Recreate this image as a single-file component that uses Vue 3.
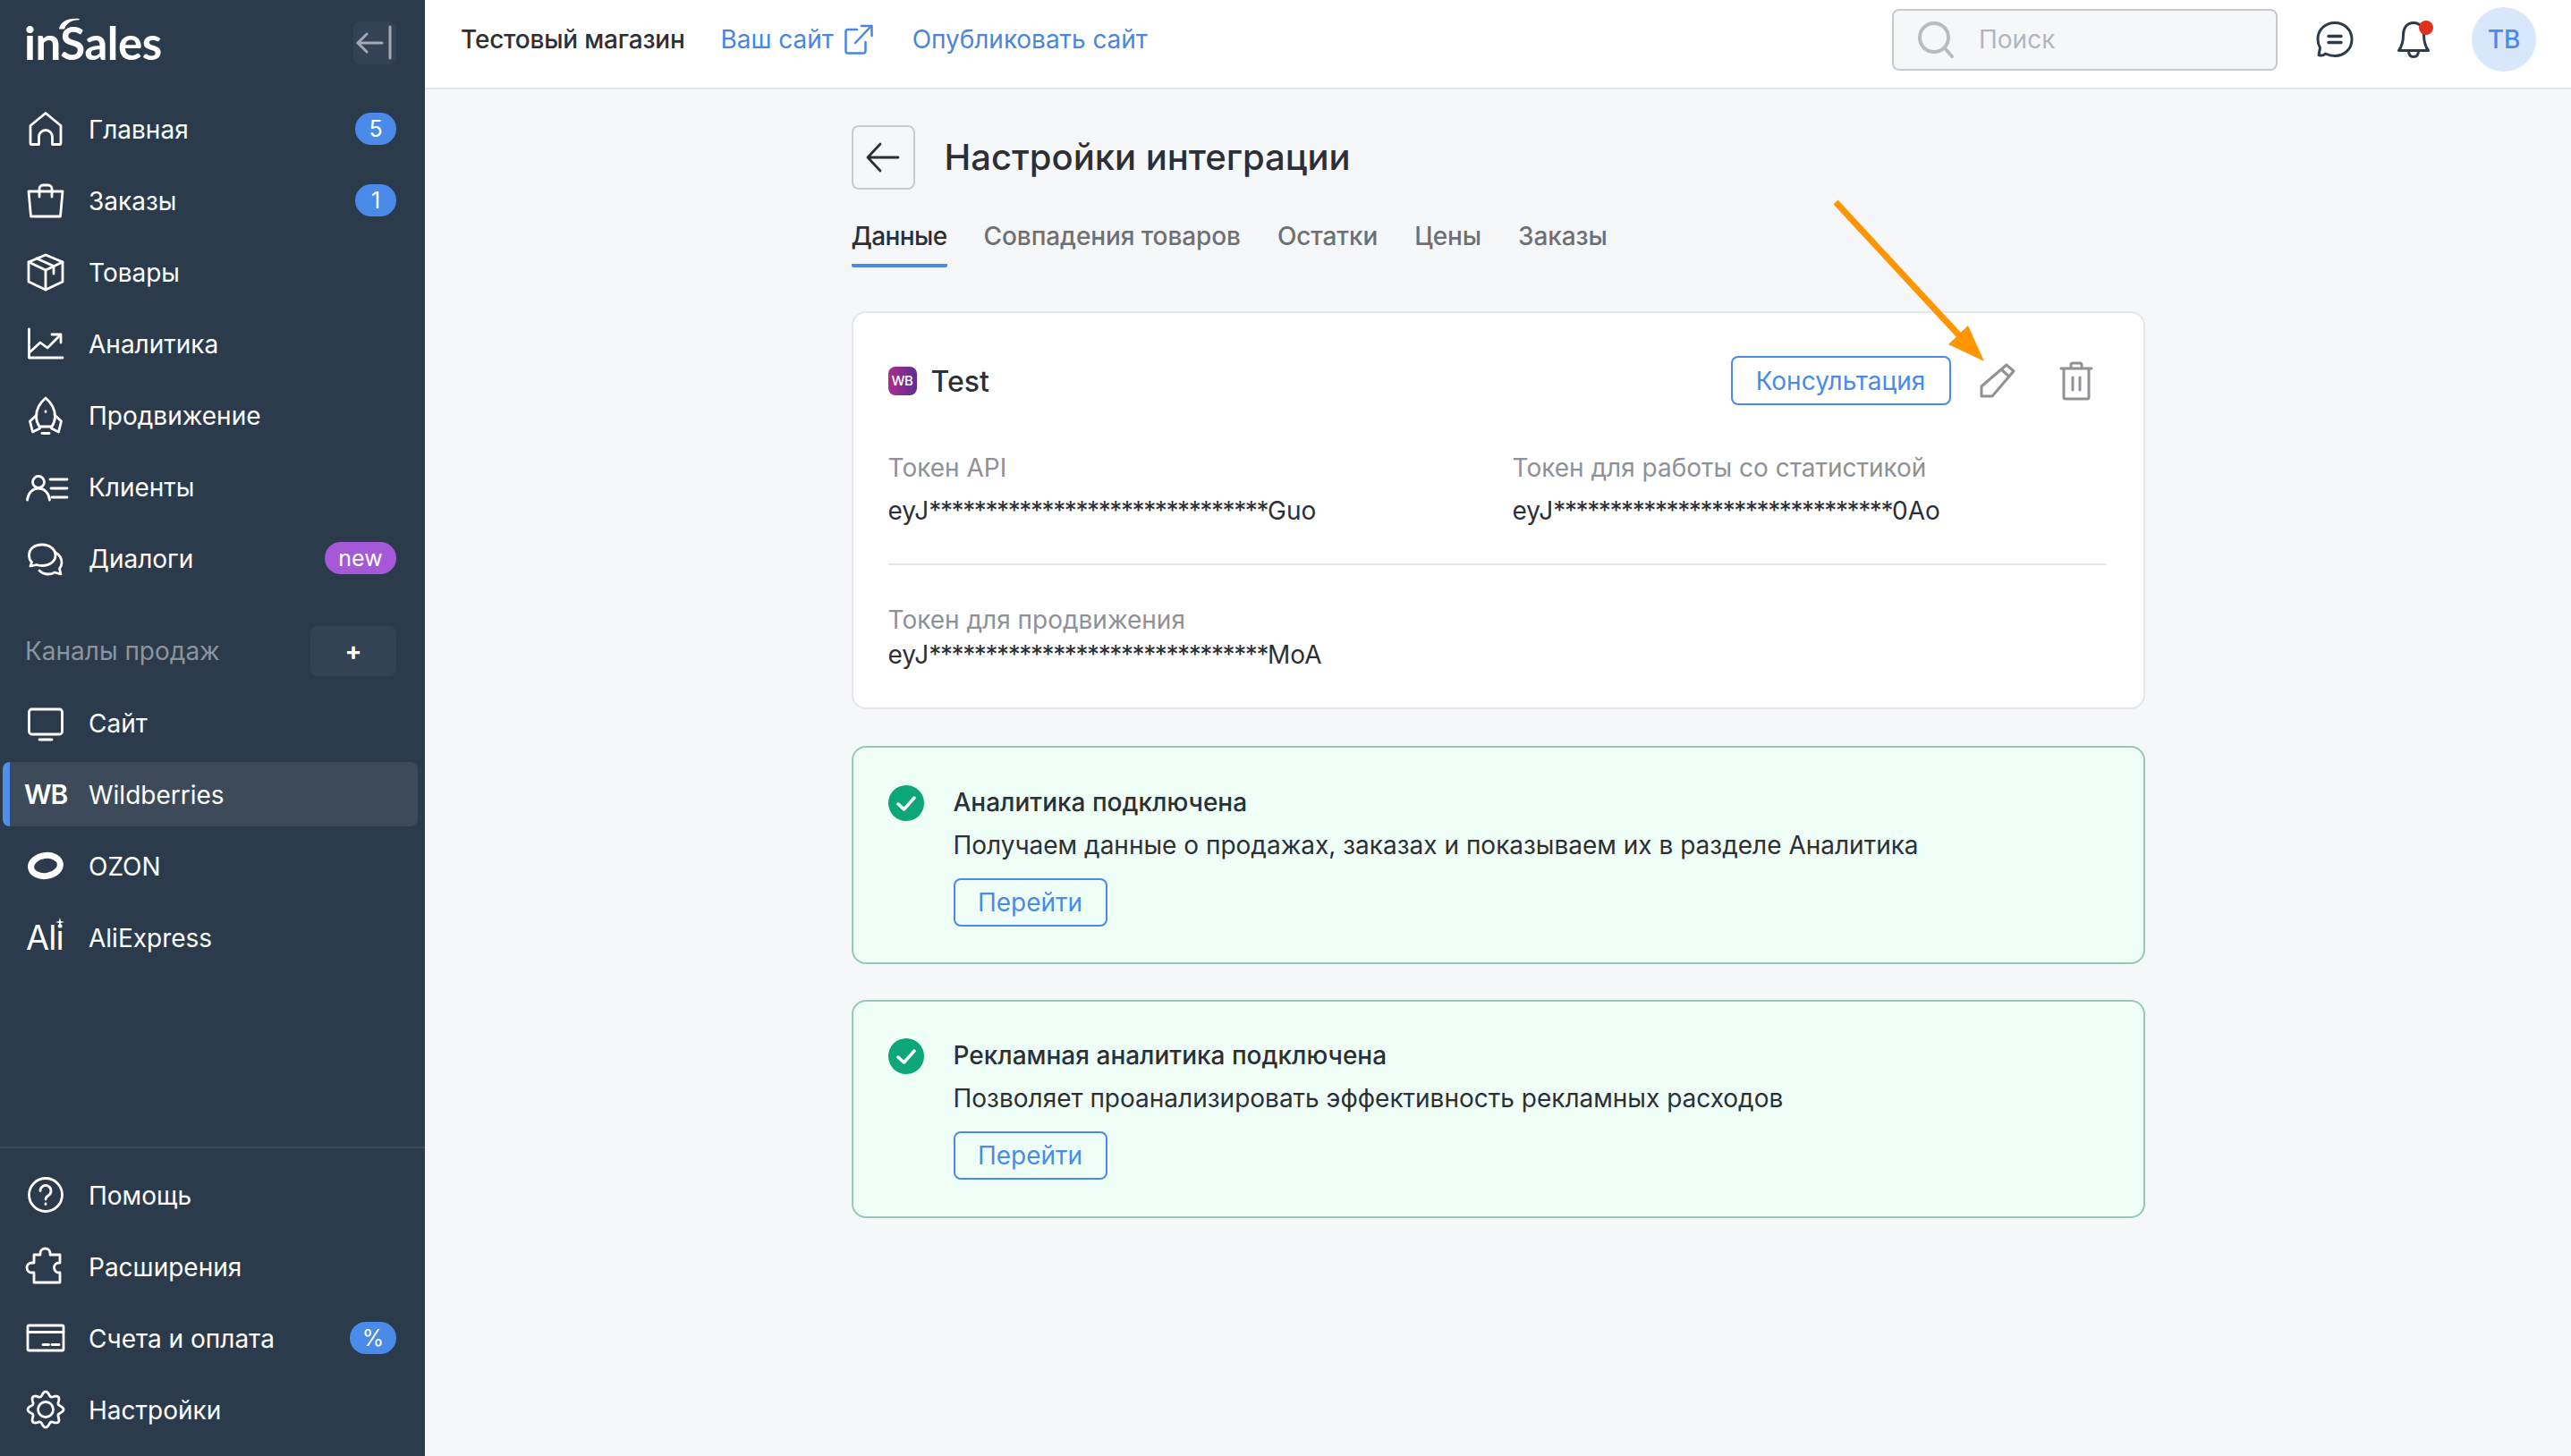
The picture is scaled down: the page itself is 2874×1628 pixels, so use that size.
<script setup>
const gear = (() => {
  let d = ''
  for (let i = 0; i <= 120; i++) {
    const t = (i / 120) * Math.PI * 2
    const r = 17.6 + 2.4 * Math.cos(8 * t)
    const x = 22 + r * Math.cos(t)
    const y = 22 + r * Math.sin(t)
    d += (i ? 'L' : 'M') + x.toFixed(2) + ' ' + y.toFixed(2)
  }
  return d + 'Z'
})()

const I = {
  home: ['M5 18.5 22 4.5 39 18.5V38a1.5 1.5 0 0 1-1.5 1.5H29.5V31a7.5 7.5 0 0 0-15 0v8.5H6.5A1.5 1.5 0 0 1 5 38Z'],
  bag: ['M3 12H41L38.5 40H5.5Z', 'M15 18V9a4 4 0 0 1 4-4h6a4 4 0 0 1 4 4v9'],
  box: ['M22 3 41 11V33L22 42 3 33V11Z', 'M3 11 22 20 41 11', 'M22 20V42', 'M12 7 31 15.5V24'],
  chart: ['M3.5 6V38H41', 'M4 32 16 21 24 27 38 13', 'M29 12H39V21'],
  rocket: ['M22 3C15 9 11.5 17 11.5 23.5c0 4 1.5 8.5 3.5 11.5h14c2-3 3.5-7.5 3.5-11.5 0-6.5-3.5-14.500-10.500-20.500Z', 'M12 22 4.500 29 7.500 41 15.500 37', 'M32 22 39.500 29 36.500 41 28.500 37', 'M18 42.500h8', 'M22 18v.5'],
  users: ['M14 10.5a6.5 6.5 0 1 0 0 13 6.5 6.5 0 0 0 0-13Z', 'M1.5 37c1-8 6-13 12.500-13s11.500 5 12.500 13', 'M27 14H46', 'M28 24H46', 'M29 34H46'],
  chat: ['M18 7C9 7 3.500 12 3.500 19c0 3 1 5.500 3 7.500L5 31l7-1.500c2 .8 4 1 6 1 9 0 15-5 15-11.500S27 7 18 7Z', 'M32.500 15.500C37 18 40 22 40 27c0 3-1 5-2.500 7L39 40l-7-2c-2 1.500-4.500 2-7 2-4 0-7.500-1.500-10-4'],
  monitor: ['M6.500 7h31a3 3 0 0 1 3 3v22a3 3 0 0 1-3 3h-31a3 3 0 0 1-3-3V10a3 3 0 0 1 3-3Z', 'M15 41H29'],
  help: ['M22 3.500a18.500 18.500 0 1 0 0 37 18.500 18.500 0 0 0 0-37Z', 'M16 17.500a6 6 0 1 1 9 5.200c-2 1.200-3 2.300-3 4.300', 'M22 32v.5'],
  puzzle: ['M9 40H38V29h-1a5.500 5.500 0 0 1 0-11h1V9H27V7.500a5.500 5.500 0 0 0-11 0V9H9v9H6.500a5.500 5.500 0 0 0 0 11H9Z'],
  card: ['M3.500 8h37a1.500 1.500 0 0 1 1.500 1.500v25a1.500 1.500 0 0 1-1.500 1.500h-37A1.500 1.500 0 0 1 2 34.500v-25A1.500 1.500 0 0 1 3.500 8Z', 'M2 15.500H42', 'M19 29.500h6.500', 'M29 29.500h8'],
  gear: [gear, 'M22 13.500a8.500 8.500 0 1 0 0 17 8.500 8.500 0 0 0 0-17Z'],
}

const mainNav = [
  { label: 'Главная', icon: 'home', badge: '5' },
  { label: 'Заказы', icon: 'bag', badge: '1' },
  { label: 'Товары', icon: 'box' },
  { label: 'Аналитика', icon: 'chart' },
  { label: 'Продвижение', icon: 'rocket' },
  { label: 'Клиенты', icon: 'users' },
  { label: 'Диалоги', icon: 'chat', badge: 'new', purple: true },
]
const bottomNav = [
  { label: 'Помощь', icon: 'help' },
  { label: 'Расширения', icon: 'puzzle' },
  { label: 'Счета и оплата', icon: 'card', badge: '%' },
  { label: 'Настройки', icon: 'gear' },
]
const tabs = ['Совпадения товаров', 'Остатки', 'Цены', 'Заказы']
const notices = [
  { title: 'Аналитика подключена', text: 'Получаем данные о продажах, заказах и показываем их в разделе Аналитика' },
  { title: 'Рекламная аналитика подключена', text: 'Позволяет проанализировать эффективность рекламных расходов' },
]
const stars = '*'.repeat(30)
</script>

<template>
  <div class="app">
    <aside class="side">
      <div class="brand">
        <div class="logo">
          <span class="logo-text">inSales</span>
          <svg class="swoosh" viewBox="0 0 24 13"><path d="M1 12.500C2 5 10 0 23 1c1 .1 1 1.200 0 1.300C15 2.500 9 6 7 12.500Z" fill="#fff" /></svg>
        </div>
        <button class="collapse">
          <svg viewBox="0 0 48 48" width="48" height="48" fill="none" stroke="#a3a9b1" stroke-width="3" stroke-linecap="round"><path d="M5 24H32M15 14 5 24 15 34" /><path d="M41 6V41" /></svg>
        </button>
      </div>

      <nav class="nav">
        <a v-for="n in mainNav" :key="n.label" class="item">
          <svg class="ico" viewBox="0 0 44 44" fill="none" stroke="#fff" stroke-width="2.800" stroke-linecap="round" stroke-linejoin="round">
            <path v-for="(d, i) in I[n.icon]" :key="i" :d="d" />
          </svg>
          <span class="lbl">{{ n.label }}</span>
          <span v-if="n.badge" class="badge" :class="{ purple: n.purple }">{{ n.badge }}</span>
        </a>
      </nav>

      <div class="section">
        <span>Каналы продаж</span>
        <button class="plus">+</button>
      </div>

      <nav class="nav">
        <a class="item">
          <svg class="ico" viewBox="0 0 44 44" fill="none" stroke="#fff" stroke-width="2.800" stroke-linecap="round" stroke-linejoin="round">
            <path v-for="(d, i) in I.monitor" :key="i" :d="d" />
          </svg>
          <span class="lbl">Сайт</span>
        </a>
        <a class="item active">
          <span class="ico wb">WB</span>
          <span class="lbl">Wildberries</span>
        </a>
        <a class="item">
          <svg class="ico" viewBox="0 0 44 44"><ellipse cx="22" cy="22" rx="16.500" ry="11.500" transform="rotate(-8 22 22)" fill="none" stroke="#fff" stroke-width="7" /></svg>
          <span class="lbl">OZON</span>
        </a>
        <a class="item">
          <span class="ico ali">Ali<svg class="star" viewBox="0 0 10 10"><path d="M5 0 6 4 10 5 6 6 5 10 4 6 0 5 4 4Z" fill="#fff" /></svg></span>
          <span class="lbl">AliExpress</span>
        </a>
      </nav>

      <nav class="nav bottom">
        <a v-for="n in bottomNav" :key="n.label" class="item">
          <svg class="ico" viewBox="0 0 44 44" fill="none" stroke="#fff" stroke-width="2.800" stroke-linecap="round" stroke-linejoin="round">
            <path v-for="(d, i) in I[n.icon]" :key="i" :d="d" />
          </svg>
          <span class="lbl">{{ n.label }}</span>
          <span v-if="n.badge" class="badge pct">{{ n.badge }}</span>
        </a>
      </nav>
    </aside>

    <div class="right">
      <header class="top">
        <span class="store">Тестовый магазин</span>
        <a class="link site">Ваш сайт
          <svg viewBox="0 0 32 34" width="32" height="34" fill="none" stroke="#4a86e0" stroke-width="2.500" stroke-linecap="round" stroke-linejoin="round"><path d="M14 6H4a2.500 2.500 0 0 0-2.500 2.500V30A2.500 2.500 0 0 0 4 32.500h17a2.500 2.500 0 0 0 2.500-2.500V20" /><path d="M12 21 30 2" /><path d="M19 2H30.500V13" /></svg>
        </a>
        <a class="link">Опубликовать сайт</a>
        <div class="search">
          <svg viewBox="0 0 42 42" width="42" height="42" fill="none" stroke="#b9bbc0" stroke-width="4" stroke-linecap="round"><path d="M19 3a16 16 0 1 0 0 32 16 16 0 0 0 0-32Z" /><path d="M31 31 39 40" /></svg>
          <span>Поиск</span>
        </div>
        <svg class="t-chat" viewBox="0 0 42 42" width="42" height="42" fill="none" stroke="#2c3b4c" stroke-width="3" stroke-linecap="round" stroke-linejoin="round"><path d="M21 2.500C10 2.500 2 10.500 2 20.500c0 4 1 7.500 2.500 10L3 38.500c2.500 1 5.500 .5 7.500-1.500 3 1.500 6.500 2.500 10.500 2.500 11 0 19-8 19-18.500S32 2.500 21 2.500Z" /><path d="M14 17.500H28M14 24.500H28" stroke-width="3.500" /></svg>
        <div class="bell">
          <svg viewBox="0 0 40 42" width="40" height="42" fill="none" stroke="#2c3b4c" stroke-width="3" stroke-linecap="round" stroke-linejoin="round"><path d="M20 2.500C12 2.500 8.500 9 8.500 16c0 6-1 12-5 17.500h33c-4-5.500-5-11.500-5-17.500 0-7-3.500-13.500-11.500-13.500Z" /><path d="M14.500 33.500c0 4.500 2 7 5.500 7s5.500-2.500 5.500-7" /></svg>
          <i></i>
        </div>
        <div class="avatar">ТВ</div>
      </header>

      <main class="main">
        <div class="content">
          <div class="title-row">
            <button class="back">
              <svg viewBox="0 0 40 40" width="40" height="40" fill="none" stroke="#2d2f36" stroke-width="2.800" stroke-linecap="round" stroke-linejoin="round"><path d="M4 20H37M17 5 3 20 17 35" /></svg>
            </button>
            <h1>Настройки интеграции</h1>
          </div>

          <div class="tabs">
            <span class="tab on">Данные</span>
            <span v-for="t in tabs" :key="t" class="tab">{{ t }}</span>
          </div>

          <section class="card">
            <div class="card-head">
              <span class="wb-logo">WB</span>
              <span class="card-name">Test</span>
              <button class="btn cons">Консультация</button>
              <svg class="act pencil" viewBox="0 0 48 48" width="48" height="48" fill="none" stroke="#8f9196" stroke-width="3" stroke-linejoin="round"><path d="M34 6 42 13 18 41H6V30Z" /><path d="M29 12 37 19" /></svg>
              <svg class="act" viewBox="0 0 48 48" width="48" height="48" fill="none" stroke="#8f9196" stroke-width="3" stroke-linecap="round" stroke-linejoin="round"><path d="M7 10H41" /><path d="M18 9V6a2 2 0 0 1 2-2h8a2 2 0 0 1 2 2v3" /><path d="M10 11V42a2 2 0 0 0 2 2h24a2 2 0 0 0 2-2V11" /><path d="M20 20V34M28 20V34" /></svg>
            </div>
            <div class="grid">
              <div>
                <div class="f-label">Токен API</div>
                <div class="f-value">eyJ<span class="stars">{{ stars }}</span>Guo</div>
              </div>
              <div>
                <div class="f-label">Токен для работы со статистикой</div>
                <div class="f-value">eyJ<span class="stars">{{ stars }}</span>0Ao</div>
              </div>
            </div>
            <div class="sep"></div>
            <div class="f-label second">Токен для продвижения</div>
            <div class="f-value close">eyJ<span class="stars">{{ stars }}</span>MoA</div>
          </section>

          <section v-for="n in notices" :key="n.title" class="notice">
            <svg class="check" viewBox="0 0 40 40" width="40" height="40"><circle cx="20" cy="20" r="20" fill="#0ca678" /><path d="M11 21 17.500 27 29 14" fill="none" stroke="#fff" stroke-width="3.500" stroke-linecap="round" stroke-linejoin="round" /></svg>
            <div class="n-body">
              <div class="n-title">{{ n.title }}</div>
              <div class="n-text">{{ n.text }}</div>
              <button class="btn go">Перейти</button>
            </div>
          </section>
        </div>
      </main>
    </div>

    <svg class="pointer" viewBox="0 0 190 200" width="190" height="200">
      <path d="M2 6 141 156" fill="none" stroke="#ff9500" stroke-width="7" />
      <path d="M168 184 150 144 128 165Z" fill="#ff9500" />
    </svg>
  </div>
</template>

<style scoped>
.app {
  position: relative;
  display: flex;
  width: 2874px;
  height: 1628px;
  overflow: hidden;
  font-family: Inter, "Noto Sans", sans-serif;
  font-size: 28px;
  line-height: 34px;
  color: #2d2f36;
  background: #f6f7f9;
}
button { font: inherit; cursor: pointer; }

/* sidebar */
.side {
  flex: 0 0 475px;
  display: flex;
  flex-direction: column;
  background: #2c3b4c;
  color: #fff;
  box-sizing: border-box;
  padding-bottom: 8px;
}
.brand {
  display: flex;
  justify-content: space-between;
  align-items: center;
  height: 108px;
  padding: 0 32px 12px 27px;
  box-sizing: border-box;
}
.logo { position: relative; }
.logo-text {
  font-family: Lato, Inter, sans-serif;
  font-weight: 700;
  font-size: 51px;
  line-height: 60px;
  letter-spacing: -.5px;
}
.swoosh { position: absolute; left: 38px; top: 2px; width: 24px; height: 13px; }
.collapse {
  width: 48px;
  height: 48px;
  padding: 0;
  border: 0;
  border-radius: 8px;
  background: #344255;
}
.nav { display: flex; flex-direction: column; }
.item {
  position: relative;
  display: flex;
  align-items: center;
  height: 72px;
  margin-bottom: 8px;
  padding-left: 29px;
  padding-right: 32px;
  font-size: 28px;
}
.item.active { margin-left: 3px; margin-right: 8px; padding-left: 26px; padding-right: 0; background: #3c4a5a; border-radius: 8px; overflow: hidden; }
.item.active::before { content: ""; position: absolute; left: 0; top: 0; bottom: 0; width: 8px; background: #4f8fea; }
.ico { flex: 0 0 44px; width: 44px; height: 44px; overflow: visible; }
.lbl { margin-left: 26px; padding-top: 1px; }
.wb { display: block; font-weight: 600; font-size: 30px; line-height: 44px; letter-spacing: -1px; margin-left: -2px; flex: 0 0 46px; width: 46px; }
.ali { position: relative; display: block; font-size: 38px; line-height: 44px; font-weight: 400; letter-spacing: -1px; }
.star { position: absolute; left: 33px; top: 0; width: 10px; height: 10px; }
.badge {
  margin-left: auto;
  min-width: 46px;
  height: 36px;
  padding: 0 10px;
  box-sizing: border-box;
  border-radius: 18px;
  background: #4a8ae8;
  font-size: 25px;
  line-height: 36px;
  text-align: center;
}
.badge.purple { width: 80px; background: #a558d8; }
.badge.pct { width: 52px; }
.section {
  display: flex;
  justify-content: space-between;
  align-items: center;
  margin: 32px 32px 16px 28px;
  height: 56px;
  color: #8b949e;
}
.plus {
  width: 96px;
  height: 56px;
  border: 0;
  padding: 0;
  border-radius: 8px;
  background: #344255;
  color: #fff;
  font-weight: 700;
}
.bottom {
  margin-top: auto;
  padding-top: 16px;
  border-top: 2px solid #3b4b5a;
}

/* right column */
.right { flex: 1; display: flex; flex-direction: column; min-width: 0; }
.top {
  display: flex;
  align-items: center;
  height: 100px;
  padding: 0 39px 10px 40px;
  box-sizing: border-box;
  background: #fff;
  border-bottom: 2px solid #e4e6ec;
}
.store { font-weight: 500; color: #2d2f36; letter-spacing: -.2px; }
.link { color: #4a86e0; margin-left: 40px; display: flex; align-items: center; letter-spacing: -.05px; }
.site svg { margin-left: 12px; }
.site { margin-right: 4px; }
.search {
  margin-left: auto;
  display: flex;
  align-items: center;
  width: 431px;
  height: 69px;
  box-sizing: border-box;
  padding-left: 26px;
  background: #f6f7f9;
  border: 2px solid #c8cad1;
  border-radius: 8px;
  color: #b4b6bc;
}
.search span { margin-left: 27px; }
.t-chat { margin-left: 43px; }
.bell { position: relative; width: 40px; height: 42px; margin-left: 47px; }
.bell svg { display: block; }
.bell i { position: absolute; right: -2px; top: 0; width: 16px; height: 16px; border-radius: 50%; background: #e0301e; }
.avatar {
  margin-left: 45px;
  width: 72px;
  height: 72px;
  border-radius: 50%;
  background: #d9e7fd;
  color: #4a8ae8;
  font-weight: 500;
  text-align: center;
  line-height: 72px;
}

.main { flex: 1; min-height: 0; }
.content { width: 1446px; margin: 0 auto; padding-top: 40px; }
.title-row { display: flex; align-items: center; }
.back {
  display: flex;
  align-items: center;
  justify-content: center;
  width: 71px;
  height: 72px;
  padding: 0;
  background: #f6f7f9;
  border: 2px solid #c8cad1;
  border-radius: 8px;
}
h1 { margin: 0 0 0 33px; font-size: 40px; line-height: 48px; font-weight: 500; color: #2d2f36; }
.tabs { display: flex; gap: 41px; margin-top: 35px; }
.tab { height: 52px; box-sizing: border-box; color: #6e7076; font-weight: 500; letter-spacing: -.1px; }
.tab.on { color: #2d2f36; letter-spacing: -.6px; border-bottom: 4px solid #4a8ae8; border-radius: 0 0 2px 2px; }

.card {
  margin-top: 49px;
  box-sizing: border-box;
  height: 445px;
  padding: 48px 41px 0 39px;
  background: #fff;
  border: 2px solid #e4e6ec;
  border-radius: 16px;
}
.card-head { display: flex; align-items: center; height: 55px; }
.wb-logo {
  width: 32px;
  height: 32px;
  border-radius: 8px;
  background: linear-gradient(90deg, #a92d8e, #5f2d91);
  color: #fff;
  font-size: 15px;
  line-height: 32px;
  font-weight: 500;
  text-align: center;
  letter-spacing: -.5px;
}
.card-name { margin-left: 16px; font-size: 32px; font-weight: 500; padding-top: 2px; }
.btn {
  background: transparent;
  border: 2px solid #4a8ae8;
  border-radius: 8px;
  color: #4a8ae8;
  padding: 0;
}
.cons { margin-left: auto; width: 246px; height: 55px; background: #fff; }
.act { margin-left: 40px; }
.pencil { margin-left: 28px; }
.act:last-child { margin-right: 10px; }
.grid { display: grid; grid-template-columns: 698px 1fr; margin-top: 53px; }
.f-label { color: #8f9196; }
.f-value { margin-top: 14px; color: #2d2f36; }
.stars { letter-spacing: -1.4px; }
.sep { height: 2px; margin-top: 42px; background: #e4e6ec; }
.f-label.second { margin-top: 44px; }
.f-value.close { margin-top: 5px; }

.notice {
  display: flex;
  box-sizing: border-box;
  height: 244px;
  margin-top: 41px;
  padding: 42px 41px 0 39px;
  background: #effff7;
  border: 2px solid #94c9b4;
  border-radius: 16px;
}
.notice + .notice { margin-top: 40px; }
.notice + .notice { padding-top: 41px; }
.check { flex: 0 0 40px; }
.n-body { margin-left: 33px; padding-top: 2px; }
.n-title { font-weight: 500; }
.n-text { margin-top: 14px; }
.go { display: block; margin-top: 20px; width: 172px; height: 54px; }

.pointer { position: absolute; left: 2050px; top: 220px; }
</style>
